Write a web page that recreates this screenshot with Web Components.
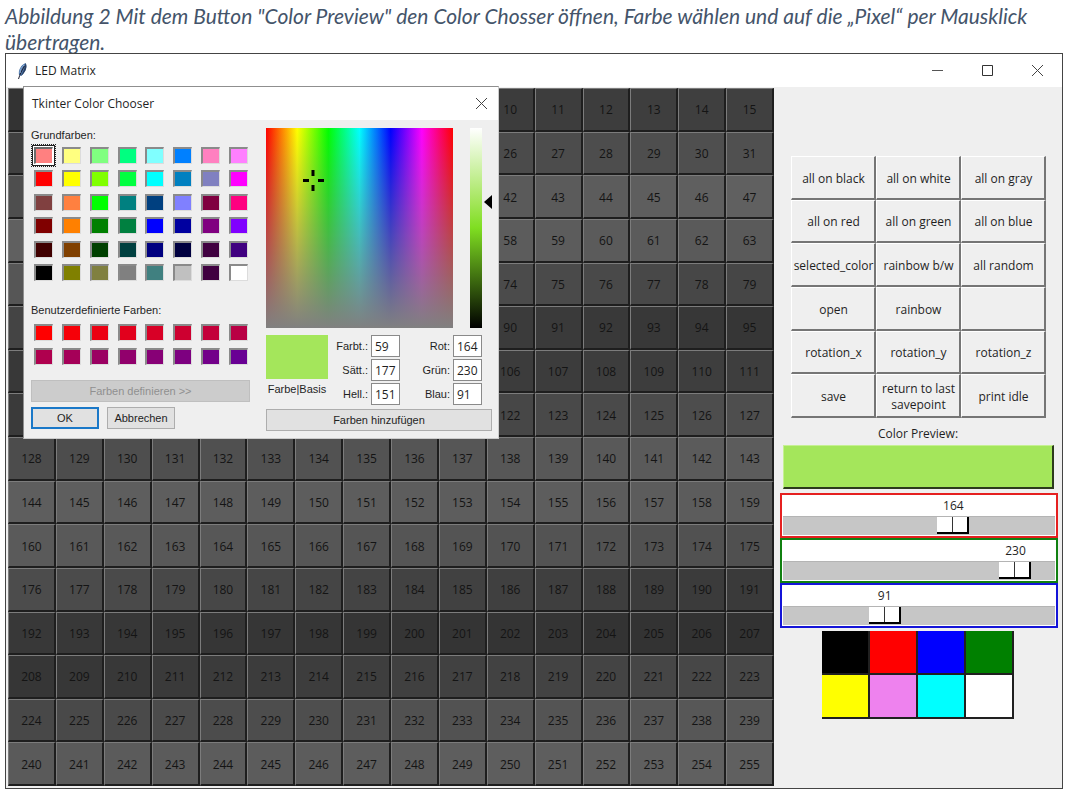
<!DOCTYPE html>
<html lang="de">
<head>
<meta charset="utf-8">
<title>LED Matrix</title>
<style>
  body { margin: 0; background: #fff; font: 12px/14px "Open Sans", "Noto Sans", sans-serif; color: #1f1f1f; }
</style>
</head>
<body>
<figure-page></figure-page>
<script>
const define = (name, html, init) => {
  const template = document.createElement('template');
  template.innerHTML = html;
  customElements.define(name, class extends HTMLElement {
    connectedCallback() {
      if (this.shadowRoot) return;
      const root = this.attachShadow({ mode: 'open' });
      root.append(template.content.cloneNode(true));
      if (init) init.call(this, root);
    }
  });
};

/* 16 x 16 matrix of LED buttons; cells behind the open dialog carry no number */
define('led-matrix', `
<style>
  :host { display: grid; grid-template-columns: repeat(16, minmax(0, 1fr)); grid-auto-rows: minmax(0, 1fr); min-height: 698px; }
  button { min-width: 0; margin: 0; padding: 2px 0 0; border: solid; border-width: 1px 2px 2px 1px;
    border-color: #7c7c7c #1e1e1e #1e1e1e #7c7c7c; font: 12px/14px "Open Sans", sans-serif; color: #141414; }
</style>`, function (root) {
  const first = [51, 64, 78, 96, 86, 68, 56, 58, 76, 94, 90, 76, 56, 54, 72, 90];
  const last = [64, 80, 96, 90, 70, 54, 62, 78, 92, 92, 80, 58, 50, 72, 88, 96];
  for (let i = 0; i < 256; i++) {
    const b = document.createElement('button');
    const row = i >> 4, col = i & 15;
    const s = Math.round(first[row] + (last[row] - first[row]) * col / 15);
    b.style.background = `rgb(${s},${s},${s})`;
    if (row > 7 || col > 9) b.textContent = i;
    root.append(b);
  }
});

/* Grid of sunken colour wells */
define('colour-wells', `
<style>
  :host { display: grid; grid-template-columns: repeat(8, 19px); grid-auto-rows: 17px;
    justify-content: space-between; align-content: space-between; margin: 0 2px 0 4px; }
  button { margin: 0; padding: 0; border: solid; border-width: 2px 1px 1px 2px; border-color: #8a8a8a #dcdcdc #dcdcdc #8a8a8a; }
  button.current { border-color: #6a6a6a #fff #fff #6a6a6a; outline: 1px dotted #222; outline-offset: 2px; box-shadow: 0 0 0 1px #fff, 0 0 0 2px #222; }
</style>`, function (root) {
  this.getAttribute('colours').split(' ').forEach((c, i) => {
    const b = document.createElement('button');
    b.style.backgroundColor = '#' + c;
    b.setAttribute('aria-label', '#' + c);
    if (i === 0 && this.hasAttribute('current')) b.className = 'current';
    root.append(b);
  });
});

/* Label and number box */
define('number-field', `
<style>
  :host { display: block; }
  label { display: flex; align-items: center; justify-content: flex-end; gap: 3px; }
  input { box-sizing: border-box; width: 29px; height: 22px; margin: 0; padding: 0 0 0 3px; border: 1px solid #8a8a8a;
    background: #fff; font: 12px/14px "Open Sans", sans-serif; color: #1f1f1f; }
</style>
<label><slot></slot><input type="text" inputmode="numeric"></label>`, function (root) {
  root.querySelector('input').value = this.getAttribute('value');
});

define('dialog-button', `
<style>
  :host { display: block; }
  button { box-sizing: border-box; width: 100%; height: 22px; margin: 0; padding: 0; border: 1px solid #adadad;
    background: #e1e1e1; font: 11px/14px "Liberation Sans", sans-serif; color: #1f1f1f; }
  :host([primary]) button { border: 2px solid #1a78c8; }
  :host([off]) button { background: #ccc; border-color: #bfbfbf; color: #909090; }
</style>
<button><slot></slot></button>`, function (root) {
  if (this.hasAttribute('off')) root.querySelector('button').disabled = true;
});

define('colour-dialog', `
<style>
  :host { display: block; box-sizing: border-box; width: 476px; border: 1px solid #8f8f8f; border-right-color: #ccc; border-bottom-color: #ccc; background: #efefef;
    font: 11px/14px "Liberation Sans", sans-serif; color: #1f1f1f; }
  header { display: flex; align-items: center; justify-content: space-between; height: 33px; padding: 0 10px 0 8px; background: #fff;
    font: 12px/16px "Open Sans", sans-serif; }
  header button { display: flex; margin: 0; padding: 0; border: 0; background: none; }
  .body { display: grid; grid-template-columns: 219px 226px; gap: 16px; padding: 8px 6px 7px 7px; }
  .left, .right { display: flex; flex-direction: column; }
  .basic { height: 134px; margin: 5px 2px 22px 3px; }
  .custom { height: 41px; margin: 7px 2px 15px 3px; }
  .define { margin-bottom: 5px; }
  .row { display: grid; grid-template-columns: 68px 68px; gap: 8px; }
  .pick { display: flex; height: 200px; margin-bottom: 7px; }
  .field { flex: 0 0 187px; background: linear-gradient(rgba(128,128,128,0), #808080), linear-gradient(90deg, #f00, #ff0, #0f0, #0ff, #00f, #f0f, #f00); }
  .light { flex: 0 0 12px; margin-left: 17px; background: linear-gradient(#fff, #a4e65b 37%, #7fde21 50%, #000); }
  .arrow { flex: 0 0 8px; height: 14px; margin: 67px 0 0 2px; }
  .values { display: grid; grid-template-columns: 62px 70px 80px; gap: 2px; height: 70px; margin-bottom: 4px; }
  .sample { height: 44px; margin-bottom: 3px; background: #a4e65b; }
  .basis { text-align: center; }
  .nums { display: flex; flex-direction: column; justify-content: space-between; }
</style>
<header><span>Tkinter Color Chooser</span>
  <button aria-label="Schließen"><svg width="13" height="13" viewBox="0 0 13 13"><path d="M1 1l11 11M12 1L1 12" stroke="#444" fill="none"/></svg></button></header>
<div class="body">
  <div class="left">
    <span>Grundfarben:</span>
    <colour-wells class="basic" current colours="ff8080 ffff80 80ff80 00ff80 80ffff 0080ff ff80c0 ff80ff ff0000 ffff00 80ff00 00ff40 00ffff 0080c0 8080c0 ff00ff 804040 ff8040 00ff00 008080 004080 8080ff 800040 ff0080 800000 ff8000 008000 008040 0000ff 0000a0 800080 8000ff 400000 804000 004000 004040 000080 000040 400040 400080 000000 808000 808040 808080 408080 c0c0c0 400040 ffffff"></colour-wells>
    <span>Benutzerdefinierte Farben:</span>
    <colour-wells class="custom" colours="ff0000 f60008 ec0012 e2001c d80026 cd0030 c3003a b90044 af004e a50058 9b0062 91006c 870076 7d0080 73008a 690094"></colour-wells>
    <dialog-button class="define" off>Farben definieren &gt;&gt;</dialog-button>
    <div class="row"><dialog-button primary>OK</dialog-button><dialog-button>Abbrechen</dialog-button></div>
  </div>
  <div class="right">
    <div class="pick">
      <svg class="field" viewBox="0 0 187 200"><path d="M47 42v6M47 57v6M37 52.500h6M52 52.500h6" stroke="#000" stroke-width="3"/></svg>
      <div class="light"></div>
      <svg class="arrow" viewBox="0 0 8 14"><path d="M0 7L8 0V14Z"/></svg>
    </div>
    <div class="values">
      <div><div class="sample"></div><div class="basis">Farbe|Basis</div></div>
      <div class="nums"><number-field value="59">Farbt.:</number-field><number-field value="177">Sätt.:</number-field><number-field value="151">Hell.:</number-field></div>
      <div class="nums"><number-field value="164">Rot:</number-field><number-field value="230">Grün:</number-field><number-field value="91">Blau:</number-field></div>
    </div>
    <dialog-button>Farben hinzufügen</dialog-button>
  </div>
</div>`);

/* Channel slider with its value above the thumb */
define('channel-scale', `
<style>
  :host { display: block; box-sizing: border-box; height: 45px; padding: 1px; border: 2px solid var(--edge); background: #fff; }
  .top { display: flex; height: 20px; align-items: center; font: 12px/14px "Open Sans", sans-serif; color: #1f1f1f; }
  output { flex: 0 0 32px; text-align: center; }
  input { display: block; appearance: none; width: 100%; height: 19px; margin: 0; background: #c6c6c6; box-shadow: inset 0 1px #b4b4b4; }
  input::-webkit-slider-thumb { appearance: none; box-sizing: border-box; width: 32px; height: 17px; border: solid #000; border-width: 0 2px 2px 0;
    background: linear-gradient(90deg, #fff 15px, #333 15px, #333 16px, #fff 16px); }
</style>
<div class="top"><i class="before"></i><output></output></div>
<input type="range" min="0" max="255">`, function (root) {
  const v = +this.getAttribute('value');
  this.style.setProperty('--edge', this.getAttribute('edge'));
  const input = root.querySelector('input');
  input.value = v;
  input.setAttribute('aria-label', this.getAttribute('name'));
  root.querySelector('output').textContent = v;
  root.querySelector('.before').style.flex = `0 0 calc((100% - 32px) * ${v} / 255)`;
});

define('control-panel', `
<style>
  :host { display: flex; flex-direction: column; align-items: center; padding-top: 68px; }
  .actions { display: grid; grid-template-columns: repeat(3, minmax(0, 85px)); grid-auto-rows: minmax(0, 1fr); height: 262px; }
  .actions button { min-width: 0; margin: 0; padding: 3px 0 0 2px; border: solid; border-width: 1px 2px 2px 1px; border-color: #fff #757575 #757575 #fff;
    background: #efefef; font: 12px/16px "Open Sans", sans-serif; color: #1f1f1f; }
  .wide { align-self: stretch; margin: 0 4px 3px 6px; }
  label { font-size: 12px; line-height: 28px; margin-top: 2px; height: 25px; }
  #preview { align-self: stretch; height: 44px; margin: 0 8px 4px 9px; padding: 0; border: solid; border-width: 1px 2px 2px 1px;
    border-color: #c6f092 #2c3a1c #2c3a1c #c6f092; background: #a4e65b; }
  .swatches { display: grid; grid-template-columns: repeat(4, 48px); grid-auto-rows: 44px; }
  .swatches button { margin: 0; padding: 0; border: solid #202020; border-width: 0 2px 2px 0; }
</style>
<div class="actions">
  <button>all on black</button><button>all on white</button><button>all on gray</button>
  <button>all on red</button><button>all on green</button><button>all on blue</button>
  <button>selected_color</button><button>rainbow b/w</button><button>all random</button>
  <button>open</button><button>rainbow</button><button></button>
  <button>rotation_x</button><button>rotation_y</button><button>rotation_z</button>
  <button>save</button><button>return to last savepoint</button><button>print idle</button>
</div>
<label for="preview">Color Preview:</label>
<button id="preview"></button>
<div class="wide">
  <channel-scale name="Rot" value="164" edge="#e52020"></channel-scale>
  <channel-scale name="Grün" value="230" edge="#108010"></channel-scale>
  <channel-scale name="Blau" value="91" edge="#1414d8"></channel-scale>
</div>
<div class="swatches"></div>`, function (root) {
  for (const c of ['black', 'red', 'blue', 'green', 'yellow', 'violet', 'cyan', 'white']) {
    const b = document.createElement('button');
    b.style.backgroundColor = c;
    b.setAttribute('aria-label', c);
    root.querySelector('.swatches').append(b);
  }
});

define('app-window', `
<style>
  :host { display: block; position: relative; border: 1px solid #444; background: #efefef; }
  header { display: flex; align-items: center; height: 33px; padding: 0 18px 0 10px; background: #fff; font: 12px/16px "Open Sans", sans-serif; }
  header span { flex: 1; margin-left: 6px; }
  header button { display: flex; margin: 0 0 0 37px; padding: 0; border: 0; background: none; }
  main { display: grid; grid-template-columns: minmax(0, 766fr) minmax(0, 288fr); padding: 1px 0 2px 2px; }
  colour-dialog { position: absolute; left: 17px; top: 32px; }
</style>
<header>
  <svg width="13" height="18" viewBox="0 0 13 18"><path d="M9.500 1C5 3 2 8 3 13L5 14C9 11 12 5 9.500 1Z" fill="#4a74a8"/><path d="M9.500 1C9 6 7 10 5 14C9 11 12 5 9.500 1Z" fill="#2a3f60"/><path d="M8.500 4C6 8 4 12 2.500 17" stroke="#223" fill="none"/><path d="M8 3C5.500 5 4 8 4 11" stroke="#8fb0d8" fill="none"/></svg>
  <span>LED Matrix</span>
  <button aria-label="Minimieren"><svg width="13" height="13" viewBox="0 0 13 13"><path d="M1 6.500h11" stroke="#555"/></svg></button>
  <button aria-label="Maximieren"><svg width="13" height="13" viewBox="0 0 13 13"><path d="M1.500 1.500h10v10h-10z" stroke="#333" fill="none"/></svg></button>
  <button aria-label="Schließen"><svg width="13" height="13" viewBox="0 0 13 13"><path d="M1 1l11 11M12 1L1 12" stroke="#444" fill="none"/></svg></button>
</header>
<main><led-matrix></led-matrix><control-panel></control-panel></main>
<colour-dialog></colour-dialog>`);

define('figure-page', `
<style>
  :host { display: block; padding: 3px 5px 7px; }
  p { margin: 0; height: 50px; font: italic 21px/26px Lato, sans-serif; color: #44546a; }
</style>
<p>Abbildung 2 Mit dem Button "Color Preview" den Color Chosser öffnen, Farbe wählen und auf die „Pixel“ per Mausklick übertragen.</p>
<app-window></app-window>`);
</script>
</body>
</html>
